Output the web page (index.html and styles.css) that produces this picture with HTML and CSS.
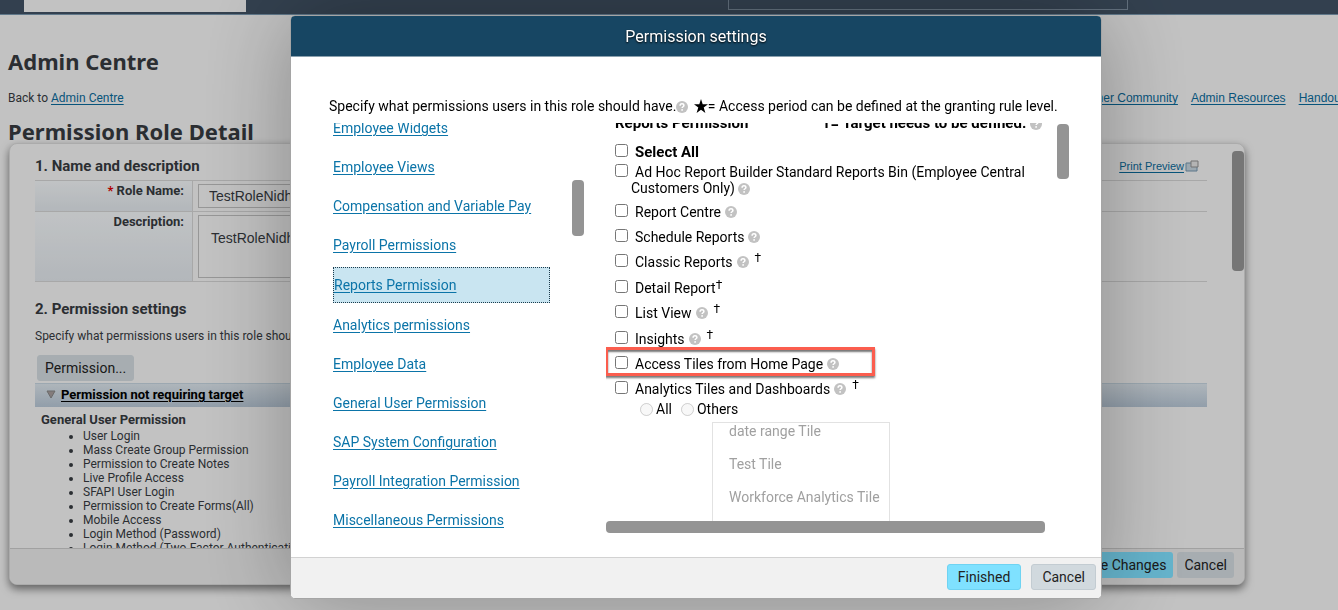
FILE: index.html
```
<!DOCTYPE html>
<html lang="en">
<head>
  <meta charset="UTF-8">
  <title>Permission Role Detail</title>
  <meta name="viewport" content="width=device-width,initial-scale=1">
  <link rel="stylesheet" href="styles.css">
</head>
<body>
  <!-- help icon, used all over the dialog -->
  <svg class="defs" width="0" height="0" aria-hidden="true">
    <symbol id="help" viewBox="0 0 12 12">
      <circle cx="6" cy="6" r="6" fill="#c2c2c2"/>
      <path d="M4.1 4.7C4.1 3.4 4.9 2.7 6 2.7s1.9.7 1.9 1.7c0 1.4-1.8 1.3-1.8 2.7" fill="none" stroke="#fff" stroke-width="1.5"/>
      <circle cx="6.1" cy="8.9" r=".9" fill="#fff"/>
    </symbol>
  </svg>

  <div class="page">
    <header class="topbar">
      <div class="brand"></div>
      <input class="search" type="text" aria-label="Search">
    </header>

    <h1>Admin Centre</h1>
    <div class="crumbs">
      <span>Back to <a href="#">Admin Centre</a></span>
      <nav>
        <a href="#">Customer Community</a>
        <a href="#">Admin Resources</a>
        <a href="#">Handouts</a>
      </nav>
    </div>
    <h1 class="detail-title">Permission Role Detail</h1>

    <main class="panel">
      <div class="panel-body">
        <div class="panel-content">
          <div class="section-head">
            <h2>1. Name and description</h2>
            <a class="print" href="#">Print Preview</a>
            <svg width="14" height="12" viewBox="0 0 14 12">
              <path d="M1 3h11v8H1z" fill="#c3d2dd" stroke="#7295ad"/>
              <path d="M6 1h7v6H6z" fill="#e2e2e2" stroke="#8f8f8f"/>
            </svg>
          </div>
          <div class="form-row">
            <label for="role"><span class="req">*</span> Role Name:</label>
            <div class="field"><input id="role" type="text" value="TestRoleNidhi"></div>
          </div>
          <div class="form-row tall">
            <label for="desc">Description:</label>
            <div class="field"><textarea id="desc">TestRoleNidhi</textarea></div>
          </div>

          <h2 class="second">2. Permission settings</h2>
          <p class="note">Specify what permissions users in this role should have.</p>
          <button class="btn permission" type="button">Permission...</button>
          <div class="group-bar">
            <svg width="10" height="9" viewBox="0 0 10 9"><path d="M1 1h8L5 8z" fill="#a59c9c" stroke="#858585"/></svg>
            <a href="#">Permission not requiring target</a>
          </div>
          <h3>General User Permission</h3>
          <ul class="granted">
            <li>User Login</li>
            <li>Mass Create Group Permission</li>
            <li>Permission to Create Notes</li>
            <li>Live Profile Access</li>
            <li>SFAPI User Login</li>
            <li>Permission to Create Forms(All)</li>
            <li>Mobile Access</li>
            <li>Login Method (Password)</li>
            <li>Login Method (Two-Factor Authentication)</li>
          </ul>
        </div>
        <div class="thumb page-thumb"></div>
      </div>
      <footer class="panel-foot">
        <button class="btn primary" type="button">Save Changes</button>
        <button class="btn" type="button">Cancel</button>
      </footer>
    </main>
  </div>

  <div class="overlay">
    <div class="dialog" role="dialog" aria-labelledby="dlg-title">
      <header id="dlg-title" class="dialog-head">Permission settings</header>
      <div class="dialog-body">
        <p class="intro">Specify what permissions users in this role should have.<svg class="help"><use href="#help"/></svg>
          <svg class="star" viewBox="0 0 14 14"><path d="M7 0l1.7 5.2H14L9.7 8.4 11.4 14 7 10.7 2.6 14l1.7-5.6L0 5.2h5.3z"/></svg>= Access period can be defined at the granting rule level.</p>
        <div class="columns">
          <nav class="categories">
            <a href="#">Employee Widgets</a>
            <a href="#">Employee Views</a>
            <a href="#">Compensation and Variable Pay</a>
            <a href="#">Payroll Permissions</a>
            <a href="#" class="selected">Reports Permission</a>
            <a href="#">Analytics permissions</a>
            <a href="#">Employee Data</a>
            <a href="#">General User Permission</a>
            <a href="#">SAP System Configuration</a>
            <a href="#">Payroll Integration Permission</a>
            <a href="#">Miscellaneous Permissions</a>
          </nav>
          <div class="thumb list-thumb"></div>

          <div class="options-wrap">
            <div class="options">
              <div class="options-title">
                <span>Reports Permission</span>
                <span>†= Target needs to be defined. <svg class="help"><use href="#help"/></svg></span>
              </div>
              <div class="option all"><input type="checkbox" id="o0"><label for="o0">Select All</label></div>
              <div class="option two-line"><input type="checkbox" id="o1"><label for="o1">Ad Hoc Report Builder Standard Reports Bin (Employee Central<br>Customers Only) <svg class="help"><use href="#help"/></svg></label></div>
              <div class="option"><input type="checkbox" id="o2"><label for="o2">Report Centre</label><svg class="help"><use href="#help"/></svg></div>
              <div class="option"><input type="checkbox" id="o3"><label for="o3">Schedule Reports</label><svg class="help"><use href="#help"/></svg></div>
              <div class="option target"><input type="checkbox" id="o4"><label for="o4">Classic Reports</label><svg class="help"><use href="#help"/></svg><sup>†</sup></div>
              <div class="option"><input type="checkbox" id="o5"><label for="o5">Detail Report<sup>†</sup></label></div>
              <div class="option target"><input type="checkbox" id="o6"><label for="o6">List View</label><svg class="help"><use href="#help"/></svg><sup>†</sup></div>
              <div class="option target"><input type="checkbox" id="o7"><label for="o7">Insights</label><svg class="help"><use href="#help"/></svg><sup>†</sup></div>
              <div class="option marked"><input type="checkbox" id="o8"><label for="o8">Access Tiles from Home Page</label><svg class="help"><use href="#help"/></svg></div>
              <div class="option target"><input type="checkbox" id="o9"><label for="o9">Analytics Tiles and Dashboards</label><svg class="help"><use href="#help"/></svg><sup>†</sup></div>
              <div class="scope">
                <input type="radio" name="scope" id="s1" disabled><label for="s1">All</label>
                <input type="radio" name="scope" id="s2" disabled><label for="s2">Others</label>
              </div>
              <ul class="tiles">
                <li>date range Tile</li>
                <li>Test Tile</li>
                <li>Workforce Analytics Tile</li>
              </ul>
            </div>
            <div class="thumb wide-thumb"></div>
          </div>
          <div class="thumb options-thumb"></div>
        </div>
      </div>
      <footer class="dialog-foot">
        <button class="btn primary" type="button">Finished</button>
        <button class="btn" type="button">Cancel</button>
      </footer>
    </div>
  </div>
</body>
</html>
```
FILE: styles.css
```
:root {
  --link: #0b74a8;
  --button: #d1d9de;
  --primary: #7fe1ff;
  --line: #d2d2d2;
}
*, ::after { box-sizing: border-box; margin: 0; padding: 0; }
body {
  font-family: Roboto, "Liberation Sans", sans-serif;
  font-size: 14px; color: #000;
  height: 100vh; overflow: hidden;
}
a { color: var(--link); text-underline-offset: 2px; }
input, textarea, button { font-family: inherit; font-size: 14px; }
.defs { position: absolute; }
.help { width: 12px; height: 12px; vertical-align: -2px; flex: none; }
.thumb { background: #949494; border-radius: 4px; flex: none; }

.btn {
  height: 26px; padding: 0 10px;
  border: 1px solid #c3ccd2; border-radius: 3px;
  background: var(--button); color: #222;
}
.btn.primary { background: var(--primary); border-color: #6fd3f2; }

/* page behind the dialog */
.page {
  height: 100vh; display: flex; flex-direction: column;
  background: #f3f3f3; color: #363a3f; font-size: 12px;
}
.page a { color: #0a6a9a; }
.topbar {
  height: 15px; display: flex; justify-content: space-between; flex: none;
  padding: 0 210px 0 24px;
  background: #405163; border-bottom: 1px solid #7896ad;
}
.brand { width: 222px; height: 12px; background: #f3f3f3; }
.search {
  width: 400px; height: 10px;
  background: none; border: 1px solid #7c8d9e; border-top: 0;
}
h1 {
  font-family: "Noto Sans", "Open Sans", sans-serif;
  font-size: 22px; line-height: 32px;
  margin: 30px 8px 0;
}
.crumbs {
  display: flex; justify-content: space-between;
  margin: 13px 0 0 8px; line-height: 16px;
}
.crumbs nav { display: flex; gap: 13px; margin-right: -12px; font-family: "Liberation Sans", sans-serif; }
.detail-title { margin-top: 9px; }
.panel {
  flex: 1; min-height: 0; display: flex; flex-direction: column;
  margin: -4px 93px 25px 9px;
  border: 1px solid #d6d6d6; border-radius: 8px;
  box-shadow: 0 4px 8px rgba(0,0,0,.5);
  background: #f3f3f3; overflow: hidden;
}
.panel-body { flex: 1; min-height: 0; display: flex; overflow: hidden; }
.panel-content { flex: 1; padding: 12px 25px 0 25px; }
.page-thumb { width: 12px; height: 120px; margin-top: 7px; }
.section-head {
  display: flex; align-items: center; gap: 1px;
  height: 20px; margin-bottom: 4px; padding-right: 8px;
}
h2 { font-size: 15px; line-height: 20px; }
.section-head h2 { flex: 1; }
.print { font-family: "Liberation Sans", sans-serif; font-size: 11px; }
.form-row { display: flex; border-top: 1px solid var(--line); height: 31px; }
.form-row.tall { height: 71px; border-bottom: 1px solid var(--line); }
.form-row label {
  width: 158px; padding: 3px 8px 0 0;
  text-align: right; font-size: 13px; font-weight: bold; line-height: 14px;
  border-right: 1px solid var(--line);
  background: linear-gradient(#f1f4f6, #e0e5ea);
}
.req { color: #d00; }
.form-row .field { flex: 1; padding: 3px 5px; }
.field input, .field textarea {
  width: 400px; height: 24px; padding: 0 10px; display: block;
  border: 1px solid #bdbdbd; background: none; resize: none;
  color: #363a3f; font-family: "Liberation Sans", sans-serif;
}
.field textarea { height: 63px; padding: 14px 12px; }
.second { margin-top: 17px; }
.note { line-height: 16px; margin: 9px 0 11px; }
.permission { display: block; margin: 0 2px 2px; padding: 0 7px; border-color: var(--button); }
.group-bar {
  height: 24px; display: flex; align-items: center; gap: 5px; padding: 0 0 2px 11px;
  background: linear-gradient(#dae3ea, #b7c6d5); border-top: 1px solid #c3d3de;
  font-size: 13px; font-weight: bold;
}
.page .group-bar a { color: #000; }
h3 { font-size: 13px; line-height: 16px; margin: 5px 6px 1px; }
.granted { padding-left: 48px; line-height: 14px; }
.panel-foot {
  height: 36px; flex: none; display: flex; justify-content: flex-end; gap: 4px;
  padding: 3px 10px; background: #e9e9e9; border-top: 1px solid #cacaca;
}
.panel-foot .btn { padding: 0 7px; border: 0; }

/* dialog */
.overlay {
  position: fixed; inset: 0;
  display: flex; justify-content: center;
  padding: 15px 0 11px 54px;
  background: rgba(0,0,0,.2);
}
.dialog {
  width: 812px; display: flex; flex-direction: column;
  border: 1px solid #a5a5a5; border-radius: 5px; overflow: hidden;
  background: #fff; box-shadow: 0 0 90px rgba(0,0,0,.3);
}
.dialog-head {
  height: 41px; line-height: 41px; flex: none; text-align: center;
  background: #174663; border-bottom: 1px solid #8aa0ae;
  color: #fff; font-size: 16px; text-shadow: 0 1px 2px #000;
}
.dialog-body {
  flex: 1; min-height: 0; display: flex; flex-direction: column;
  padding: 40px 32px 24px 38px;
}
.intro { line-height: 18px; margin-bottom: 8px; white-space: nowrap; }
.star { width: 14px; height: 14px; margin-left: 2px; vertical-align: -2px; }
.columns { flex: 1; min-height: 0; display: flex; }
.categories {
  width: 221px; padding-left: 4px; overflow: hidden;
  display: flex; flex-direction: column; align-items: flex-start; gap: 21px;
}
.categories a { line-height: 18px; flex: none; }
.categories a:first-child { margin-top: -4px; }
.categories .selected {
  align-self: stretch; line-height: 34px; margin: -8px 0;
  background: #c9e5f1; border: 1px dotted #1c3c4d;
}
.list-thumb { width: 12px; height: 56px; margin: 57px 22px 0; }
.options-wrap { flex: 1; display: flex; flex-direction: column; min-width: 0; }
.options { flex: 1; min-height: 0; overflow: hidden; padding: 0 3px 0 9px; }
.options-title {
  display: flex; justify-content: space-between;
  margin: -10px 0 9px; line-height: 20px; font-size: 15px; font-weight: bold;
}
.option { display: flex; align-items: center; gap: 4px; height: 25px; position: relative; white-space: nowrap; }
.option input { width: 13px; height: 13px; margin: 0 3px 3px 0; flex: none; }
.option.all { height: 20px; font-size: 15px; font-weight: bold; }
.option.two-line { height: 37px; align-items: flex-start; line-height: 16px; }
.two-line input { margin-top: 2px; }
.two-line label { padding-left: 4px; text-indent: 4px; margin-left: -8px; margin-top: 2px; }
.option.target { height: 26px; }
sup { font-size: 12px; line-height: 8px; vertical-align: 4px; }
.option > sup { margin: -8px 0 0 2px; }
.option.marked { height: 24px; }
.marked::after {
  content: ""; position: absolute; top: -5px; left: -10px;
  width: 270px; height: 29px;
  border: 3px solid #fb5d4e;
  box-shadow: 0 2px 2px #777, inset 0 2px 2px #777;
  pointer-events: none;
}
.scope { display: flex; align-items: center; gap: 3px; padding-left: 25px; height: 14px; }
.scope input { width: 13px; height: 13px; }
.scope label { margin-right: 6px; }
.tiles {
  width: 178px; height: 120px; margin: 6px 0 0 97px;
  padding-left: 16px; list-style: none; color: #a0a0a0; line-height: 33px;
  border: 1px solid #e2e2e2; overflow: hidden;
}
.tiles li:first-child { margin-top: -8px; }
.wide-thumb { height: 12px; }
.options-thumb { width: 12px; height: 55px; margin: 1px 0 0 12px; }
.dialog-foot {
  height: 41px; flex: none; display: flex; justify-content: flex-end; gap: 10px;
  padding: 6px 5px; background: #f1f1f1; border-top: 1px solid var(--line);
}
```
